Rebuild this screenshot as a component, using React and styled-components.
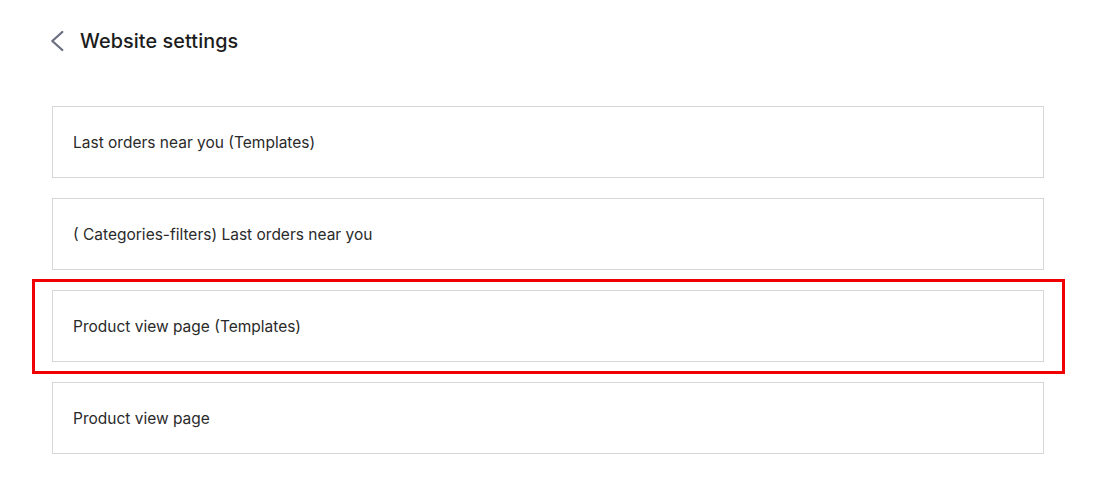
import React from "react";
import styled, { createGlobalStyle } from "styled-components";

const Global = createGlobalStyle`
  html, body { margin: 0; padding: 0; background: #fff; }
  body { font-family: Inter, "Noto Sans", sans-serif; }
`;

const Page = styled.div`
  width: 1110px;
  padding: 28px 0 0 52px;
  box-sizing: border-box;
`;

const Header = styled.div`
  display: flex;
  align-items: center;
  gap: 16px;
  height: 26px;
  margin-left: -2px;
`;

const Back = styled.button`
  display: flex;
  align-items: center;
  justify-content: center;
  border: none;
  background: none;
  padding: 0;
  width: 14px;
  height: 26px;
  color: #6b6f80;
  cursor: pointer;
`;

const Title = styled.h1`
  margin: 0;
  font-size: 19.8px;
  font-weight: 500;
  color: #1c1c1c;
  letter-spacing: 0.1px;
`;

const List = styled.div`
  display: flex;
  flex-direction: column;
  gap: 20px;
  margin-top: 52px;
  width: 992px;
`;

const Card = styled.div`
  position: relative;
  height: 72px;
  box-sizing: border-box;
  border: 1px solid #d6d6d6;
  display: flex;
  align-items: center;
  padding: 0 20px;
  font-size: 15.5px;
  color: #2a2a2a;
`;

const Highlight = styled.div`
  position: absolute;
  top: -12px;
  bottom: -13px;
  left: -21px;
  right: -22px;
  border: 3px solid #f00000;
  pointer-events: none;
`;

const items = [
  { label: "Last orders near you (Templates)" },
  { label: "( Categories-filters) Last orders near you" },
  { label: "Product view page (Templates)", highlight: true },
  { label: "Product view page" },
];

export default function App() {
  return (
    <>
      <Global />
      <Page>
        <Header>
          <Back aria-label="Back">
            <svg width="14" height="22" viewBox="0 0 14 22" fill="none">
              <path d="M12.3 2 L2.3 11 L12.3 20" stroke="currentColor" strokeWidth="2.3" strokeLinecap="round" strokeLinejoin="round" />
            </svg>
          </Back>
          <Title>Website settings</Title>
        </Header>
        <List>
          {items.map((it) => (
            <Card key={it.label}>
              {it.label}
              {it.highlight && <Highlight />}
            </Card>
          ))}
        </List>
      </Page>
    </>
  );
}
